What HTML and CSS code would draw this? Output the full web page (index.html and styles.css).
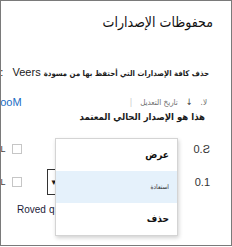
FILE: index.html
```html
<!DOCTYPE html>
<html lang="ar" dir="rtl">
<head>
    <meta charset="UTF-8">
    <meta name="viewport" content="width=device-width, initial-scale=1.0">
    <title>محفوظات الإصدارات</title>
    <link rel="stylesheet" href="styles.css">
</head>
<body>
    <div class="panel">
        <h1 class="title">محفوظات الإصدارات</h1>

        <p class="desc"><b>حذف كافة الإصدارات التي أحتفظ بها من مسودة</b> Veers&nbsp;&nbsp;&nbsp;:</p>

        <div class="list">
            <div class="cols">
                <div class="sort">
                    <span>لا.</span>
                    <span class="arrow">&#8595;</span>
                    <span>تاريخ التعديل</span>
                    <span class="bar">|</span>
                </div>
                <a class="more" href="#">MooM</a>
            </div>

            <div class="current">هذا هو الإصدار الحالي المعتمد</div>

            <div class="row">
                <span class="ver">0.&#423;</span>
                <span class="pick">
                    <span class="box"></span>
                    <span class="cut">ıL</span>
                </span>
            </div>

            <div class="row">
                <span class="ver">0.1</span>
                <span class="pick">
                    <span class="drop">&#9662;</span>
                    <span class="box"></span>
                    <span class="cut">ıL</span>
                </span>
            </div>

            <div class="by">Roved<span>q</span></div>
        </div>

        <ul class="menu">
            <li>عرض</li>
            <li class="on">استعادة</li>
            <li>حذف</li>
        </ul>
    </div>
</body>
</html>
```

FILE: styles.css
```css
body {
    margin: 0;
    font-family: "Liberation Sans", "DejaVu Sans", sans-serif;
    color: #1b1b1b;
}

.title,
.desc b,
.current,
.sort,
.menu {
    font-family: "DejaVu Sans Condensed", "DejaVu Sans", sans-serif;
}

.panel {
    position: relative;
    width: 232px;
    height: 246px;
    box-sizing: border-box;
    border: 1px solid #7a7a7a;
    overflow: hidden;
    direction: rtl;
    white-space: nowrap;
}

.title {
    margin: 11px 18px 0 0;
    font-size: 14px;
    line-height: 20px;
    font-weight: normal;
    color: #111;
}

.desc {
    margin: 33px 22px 0 0;
    font-size: 11px;
    line-height: 14px;
}

.desc b {
    font-size: 7.75px;
}

.list {
    margin-left: -3px;
}

.cols {
    display: flex;
    justify-content: space-between;
    align-items: center;
    margin-top: 14px;
    height: 14px;
}

.sort {
    display: flex;
    align-items: center;
    gap: 8px;
    margin-right: 24px;
    font-size: 8px;
    color: #6d6d6d;
}

.sort .arrow {
    color: #444;
    font-size: 9px;
}

.sort .bar {
    color: #c4c4c4;
}

.more {
    margin-left: -7px;
    color: #1a6dc4;
    font-size: 11px;
    text-decoration: none;
}

.current {
    margin: 1px 26px 0 0;
    font-size: 9.5px;
    line-height: 14px;
    font-weight: bold;
}

.row {
    display: flex;
    justify-content: space-between;
    align-items: center;
    height: 33px;
    margin-top: 8px;
}

.row + .row {
    margin-top: 0;
}

.ver {
    margin-right: 21px;
    direction: ltr;
    font-size: 11px;
    color: #333;
}

.pick {
    display: flex;
    align-items: center;
    gap: 6px;
}

.box {
    width: 8px;
    height: 8px;
    border: 1px solid #c6c6c6;
}

.cut {
    font-size: 9px;
    color: #444;
}

.drop {
    width: 20px;
    height: 24px;
    margin-left: 19px;
    border: 1px solid #333;
    font-size: 9px;
    line-height: 24px;
    text-align: left;
    padding-left: 4px;
}

.by {
    direction: ltr;
    padding-left: 19px;
    margin-top: 6px;
    font-size: 10px;
    color: #1c1c3a;
}

.by span {
    margin-left: 3px;
}

.menu {
    position: absolute;
    left: 54px;
    top: 137px;
    width: 121px;
    margin: 0;
    padding: 0;
    list-style: none;
    background: #fff;
    border: 1px solid #d4d4d4;
    box-shadow: 1px 2px 4px rgba(0, 0, 0, 0.18);
}

.menu li {
    height: 32px;
    line-height: 32px;
    padding-right: 8px;
    font-size: 10px;
    font-weight: bold;
    color: #111;
}

.menu li.on {
    background: #e5f1fb;
    font-size: 6.5px;
    font-weight: normal;
    color: #333;
}
```
